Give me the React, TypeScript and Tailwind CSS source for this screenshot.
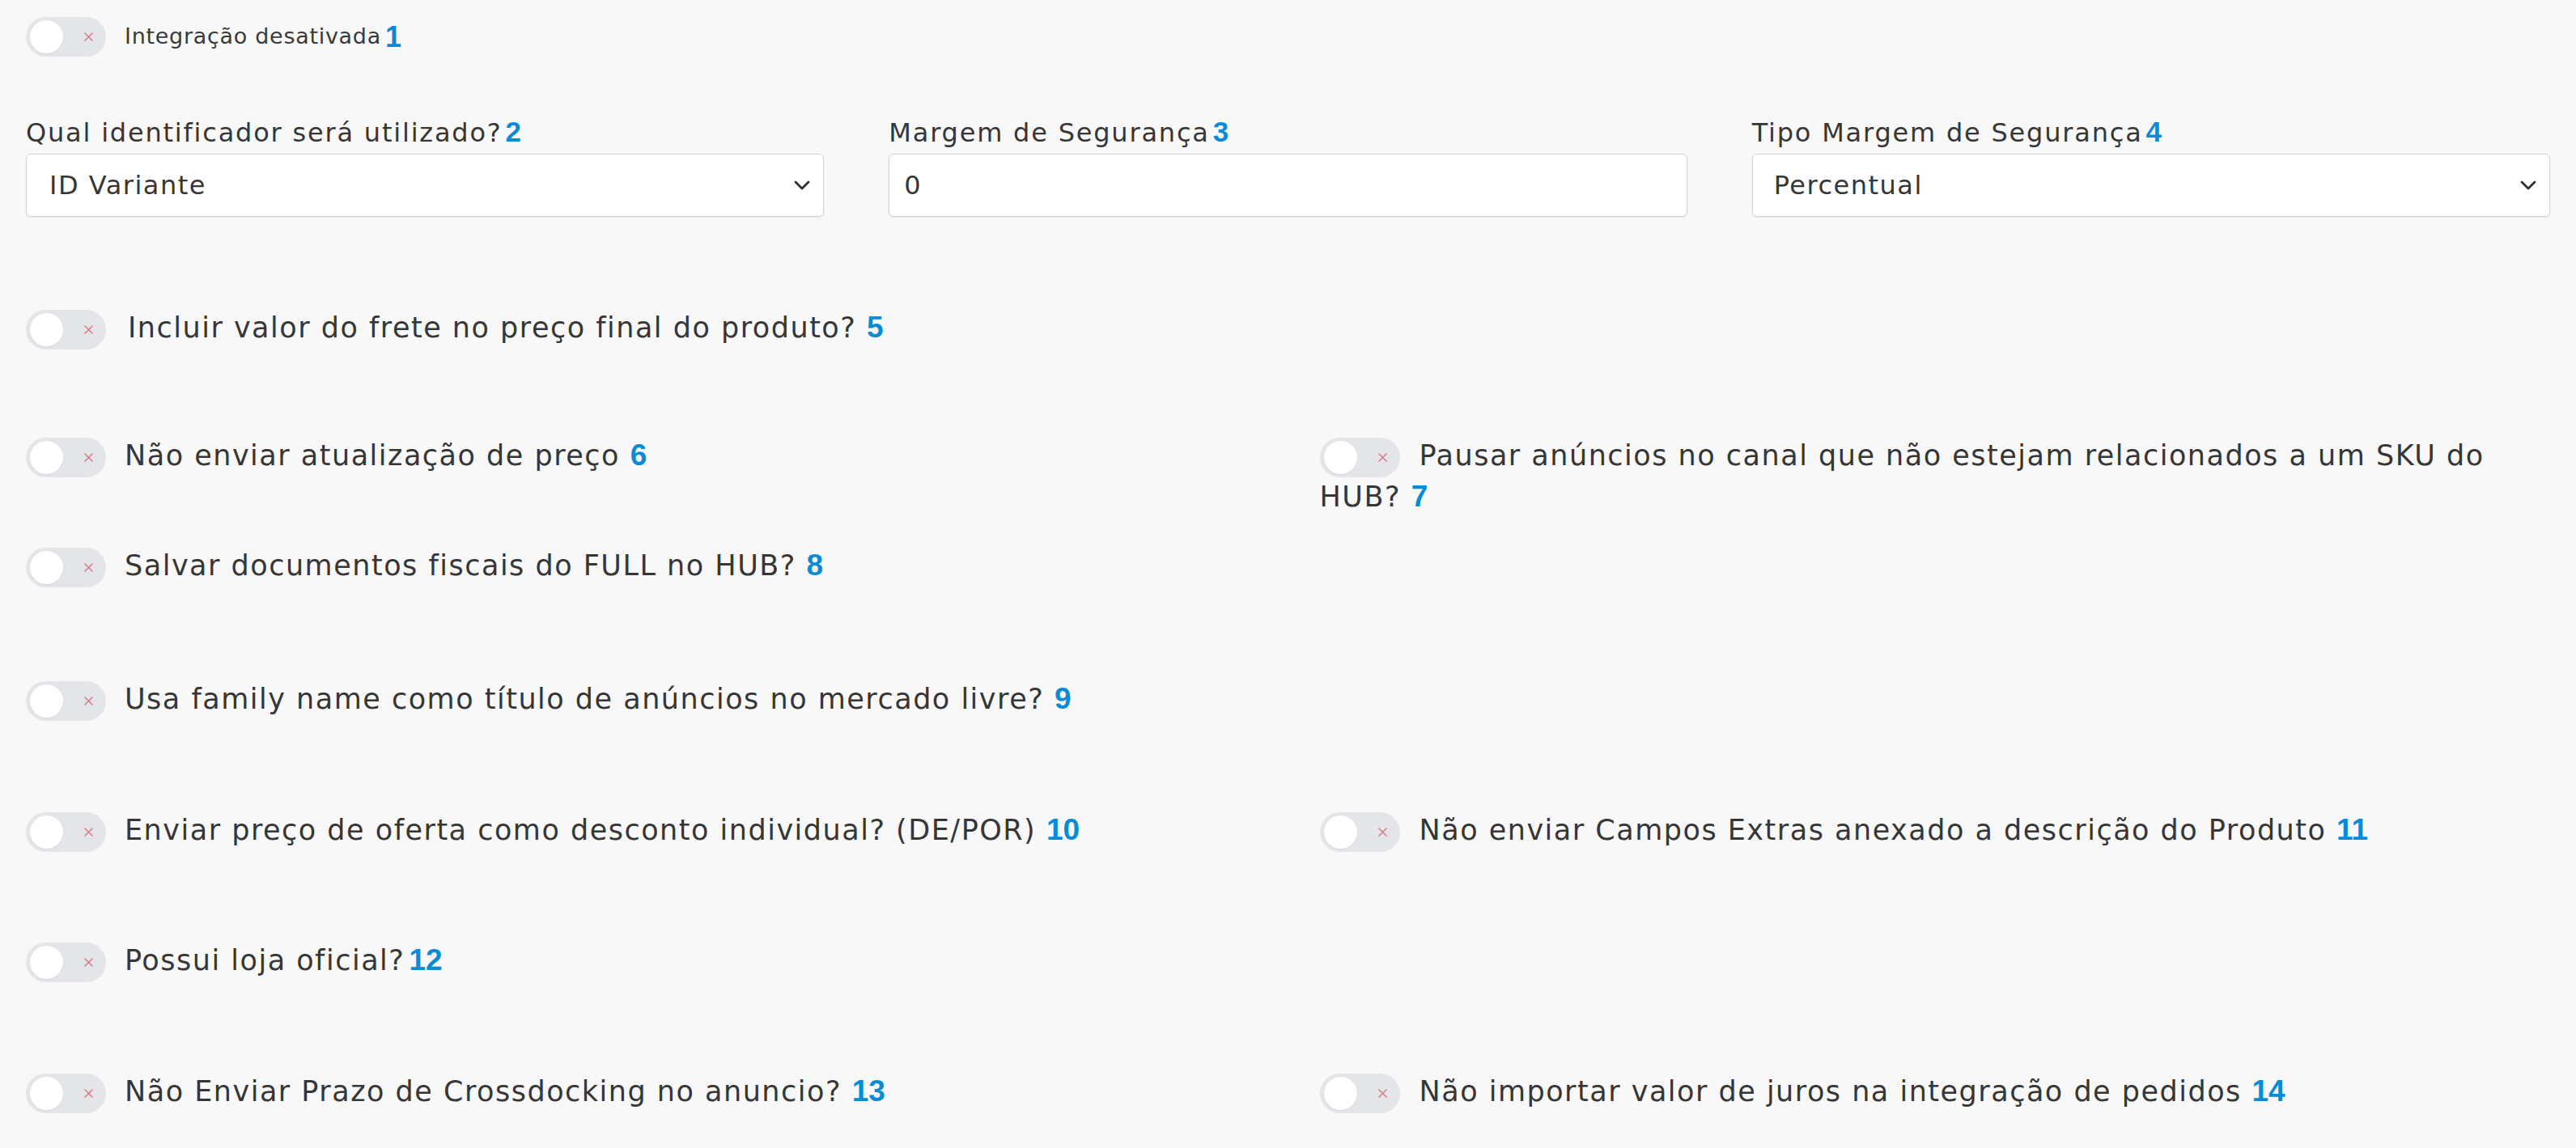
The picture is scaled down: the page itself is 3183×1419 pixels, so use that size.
import React from "react";

function Toggle({ className = "" }: { className?: string }) {
  return (
    <span
      className={
        "relative inline-block h-[49px] w-[99px] shrink-0 rounded-full bg-[#e3e5e9] align-middle " +
        className
      }
    >
      <span className="absolute left-[5px] top-[4px] h-[41px] w-[41px] rounded-full bg-white shadow-[0_1px_2px_rgba(0,0,0,0.06)]" />
      <svg
        className="absolute right-[16px] top-[19px]"
        width="11"
        height="11"
        viewBox="0 0 11 11"
      >
        <path d="M1 1 L10 10 M10 1 L1 10" stroke="#d47f8a" strokeWidth="1.6" strokeLinecap="round" />
      </svg>
    </span>
  );
}

function Num({ n, space = true }: { n: string; space?: boolean }) {
  return (
    <>
      {space ? " " : null}
      <span className="font-['Liberation_Sans',Arial,sans-serif] text-[37px] font-bold tracking-normal text-[#0b8bd6]">
        {n}
      </span>
    </>
  );
}

function Item({
  text,
  text2,
  n,
  space = true,
  gap = "mr-[23px]",
}: {
  text: string;
  text2?: string;
  n: string;
  space?: boolean;
  gap?: string;
}) {
  return (
    <div className="pt-[1px] text-[35px] leading-[48px] tracking-[1.5px] text-[#363636]">
      <Toggle className={gap} />
      <span>{text}</span>
      {text2 ? (
        <>
          {" "}
          <span>{text2}</span>
        </>
      ) : null}
      {!space ? <span className="inline-block w-[5px]" /> : null}
      <Num n={n} space={space} />
    </div>
  );
}

function Chevron() {
  return (
    <svg width="20" height="12" viewBox="0 0 20 12" className="shrink-0">
      <path d="M2 2 L10 10 L18 2" fill="none" stroke="#2f2f2f" strokeWidth="2.8" strokeLinecap="round" strokeLinejoin="round" />
    </svg>
  );
}

function Label({ text, n }: { text: string; n: string }) {
  return (
    <div className="h-[40px] text-[32px] leading-[40px] tracking-[1.8px] text-[#363636]">
      {text}
      <span className="inline-block w-[4px]" />
      <span className="font-['Liberation_Sans',Arial,sans-serif] text-[35px] font-bold tracking-normal text-[#0b8bd6]">
        {n}
      </span>
    </div>
  );
}

export default function App() {
  return (
    <div className="min-h-[1419px] w-full bg-[#f8f8f8] px-[32px] pt-[21px] font-['DejaVu_Sans',sans-serif]">
      {/* Row 1 */}
      <div className="flex h-[49px] items-center">
        <Toggle className="mr-[23px]" />
        <span className="text-[27px] tracking-[0.7px] text-[#3a3a3a]">Integração desativada</span>
        <span className="inline-block w-[5px]" />
        <span className="font-['Liberation_Sans',Arial,sans-serif] text-[36px] font-bold text-[#0b8bd6]">1</span>
      </div>

      {/* Fields */}
      <div className="mt-[73px] grid grid-cols-3 gap-x-[80px]">
        <div>
          <Label text="Qual identificador será utilizado?" n="2" />
          <div className="mt-[7px] flex h-[78px] items-center justify-between rounded-[6px] border border-[#d0d3d8] bg-white pl-[28px] pr-[16px] shadow-[0_1px_2px_rgba(0,0,0,0.08)]">
            <span className="text-[32px] tracking-[1.5px] text-[#363636]">ID Variante</span>
            <Chevron />
          </div>
        </div>
        <div>
          <Label text="Margem de Segurança" n="3" />
          <div className="mt-[7px] flex h-[78px] items-center rounded-[6px] border border-[#d0d3d8] bg-white pl-[18px] shadow-[0_1px_2px_rgba(0,0,0,0.08)]">
            <span className="text-[32px] tracking-[1.5px] text-[#363636]">0</span>
          </div>
        </div>
        <div>
          <Label text="Tipo Margem de Segurança" n="4" />
          <div className="mt-[7px] flex h-[78px] items-center justify-between rounded-[6px] border border-[#d0d3d8] bg-white pl-[26px] pr-[16px] shadow-[0_1px_2px_rgba(0,0,0,0.08)]">
            <span className="text-[32px] tracking-[1.5px] text-[#363636]">Percentual</span>
            <Chevron />
          </div>
        </div>
      </div>

      {/* Row 5 */}
      <div className="mt-[112px] h-[50px]">
        <Item text="Incluir valor do frete no preço final do produto?" n="5" gap="mr-[27px]" />
      </div>

      {/* Row 6 / 7 */}
      <div className="mt-[108px] grid h-[50px] grid-cols-2 gap-x-[78px]">
        <Item text="Não enviar atualização de preço" n="6" />
        <Item
          text="Pausar anúncios no canal que não estejam relacionados a um SKU do"
          text2="HUB?"
          n="7"
          gap="mr-[24px]"
        />
      </div>

      {/* Row 8 */}
      <div className="mt-[86px] grid h-[50px] grid-cols-2 gap-x-[78px]">
        <Item text="Salvar documentos fiscais do FULL no HUB?" n="8" />
        <div />
      </div>

      {/* Row 9 */}
      <div className="mt-[115px] grid h-[50px] grid-cols-2 gap-x-[78px]">
        <Item text="Usa family name como título de anúncios no mercado livre?" n="9" />
        <div />
      </div>

      {/* Row 10 / 11 */}
      <div className="mt-[112px] grid h-[50px] grid-cols-2 gap-x-[78px]">
        <Item text="Enviar preço de oferta como desconto individual? (DE/POR)" n="10" />
        <Item text="Não enviar Campos Extras anexado a descrição do Produto" n="11" gap="mr-[24px]" />
      </div>

      {/* Row 12 */}
      <div className="mt-[111px] grid h-[50px] grid-cols-2 gap-x-[78px]">
        <Item text="Possui loja oficial?" n="12" space={false} />
        <div />
      </div>

      {/* Row 13 / 14 */}
      <div className="mt-[112px] grid h-[50px] grid-cols-2 gap-x-[78px]">
        <Item text="Não Enviar Prazo de Crossdocking no anuncio?" n="13" />
        <Item text="Não importar valor de juros na integração de pedidos" n="14" gap="mr-[24px]" />
      </div>
    </div>
  );
}
